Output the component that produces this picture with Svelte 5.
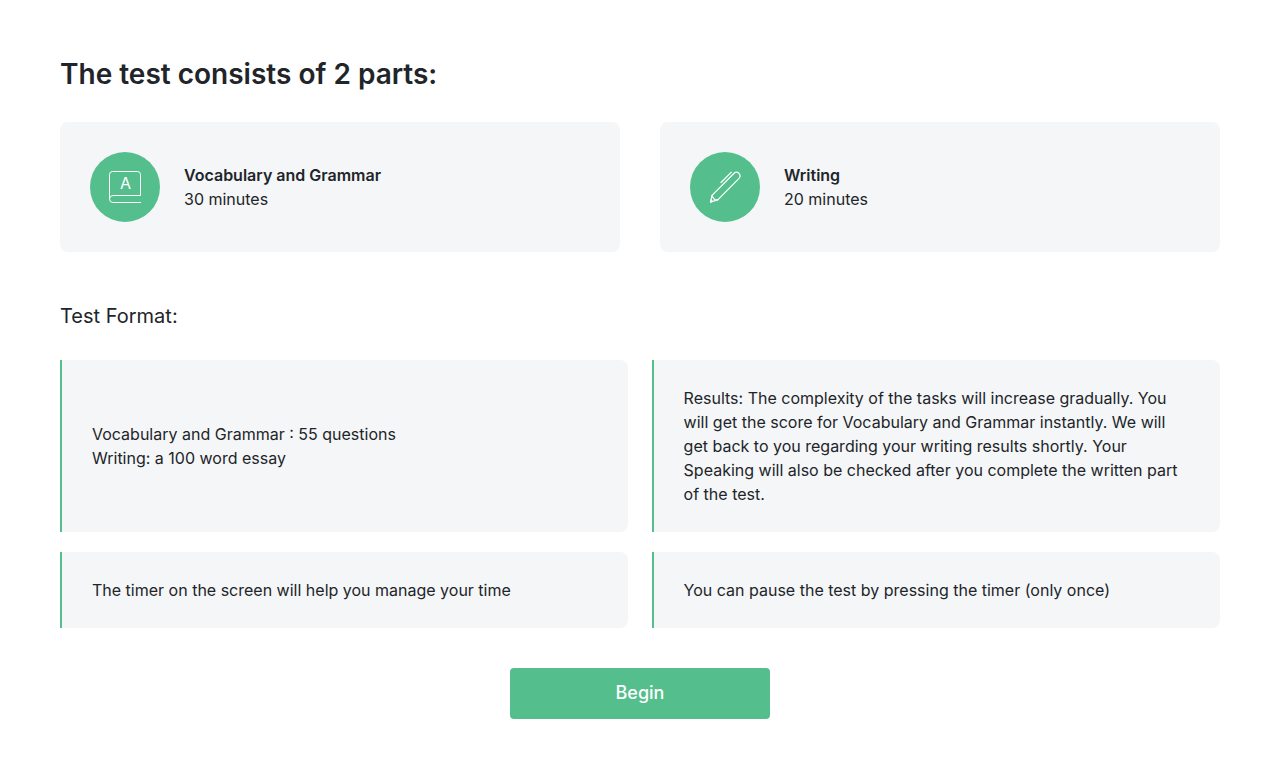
<script>
  const parts = [
    { icon: 'book', name: 'Vocabulary and Grammar', time: '30 minutes' },
    { icon: 'pen', name: 'Writing', time: '20 minutes' }
  ];
  const notes = [
    ['Vocabulary and Grammar : 55 questions', 'Writing: a 100 word essay'],
    [
      'Results: The complexity of the tasks will increase gradually. You will get the score for Vocabulary and Grammar instantly. We will get back to you regarding your writing results shortly. Your Speaking will also be checked after you complete the written part of the test.'
    ],
    ['The timer on the screen will help you manage your time'],
    ['You can pause the test by pressing the timer (only once)']
  ];
</script>

<main>
  <h1>The test consists of 2 parts:</h1>
  <section class="parts">
    {#each parts as part}
      <article class="part">
        <svg class="icon" viewBox="0 0 70 70" aria-hidden="true">
          <circle cx="35" cy="35" r="35" fill="#54be8d" />
          {#if part.icon === 'book'}
            <g fill="none" stroke="#fff" stroke-width="1">
              <path d="M19.500 47V22.500a3 3 0 0 1 3-3h25a3 3 0 0 1 3 3V43.500H23a3.500 3.500 0 0 0-3.500 3.500a3.500 3.500 0 0 0 3.500 3.500H51" />
            </g>
            <text x="35.500" y="37" text-anchor="middle" fill="#fff">A</text>
          {:else}
            <g fill="none" stroke="#fff" stroke-width="1.200" stroke-linejoin="round" stroke-linecap="round">
              <path d="M20.500 50.300L22 43.300L43.800 21.500C45.400 20 47.500 20 48.900 21.300C50.300 22.800 50.300 25 48.800 26.600L28 47.600L20.500 50.300Z" />
              <path d="M22 43.300C21.600 45.500 23.500 45.200 23.900 46.500C24.500 48 26 48.500 28 47.600" />
              <path d="M31 30.500L41.400 20.100" />
            </g>
            <path d="M20.200 50.700l.7-3.600l2.700 2.500z" fill="#fff" />
          {/if}
        </svg>
        <div>
          <h2>{part.name}</h2>
          <p>{part.time}</p>
        </div>
      </article>
    {/each}
  </section>

  <h3>Test Format:</h3>
  <section class="notes">
    {#each notes as lines}
      <div class="note">
        {#each lines as line}
          <p>{line}</p>
        {/each}
      </div>
    {/each}
  </section>

  <button type="button">Begin</button>
</main>

<style>
  :global(body) {
    margin: 0;
    background: #fff;
  }
  main {
    display: flex;
    flex-direction: column;
    padding: 56px 60px 60px;
    color: #212529;
    font: 400 16px/24px Inter, 'Liberation Sans', sans-serif;
  }
  h1,
  h2,
  h3,
  p {
    margin: 0;
  }
  h1 {
    font-size: 28px;
    line-height: 36px;
    font-weight: 600;
  }
  .parts {
    display: grid;
    grid-template-columns: 1fr 1fr;
    gap: 40px;
    margin-top: 30px;
  }
  .part {
    display: flex;
    align-items: center;
    gap: 24px;
    padding: 30px;
    background: #f5f6f8;
    border-radius: 8px;
  }
  .icon {
    width: 70px;
    height: 70px;
    flex: none;
  }
  .icon text {
    font: 400 16px Inter, sans-serif;
  }
  h2 {
    font-size: 16px;
    line-height: 24px;
    font-weight: 600;
  }
  h3 {
    margin-top: 50px;
    font-size: 20px;
    line-height: 28px;
    font-weight: 400;
  }
  .notes {
    display: grid;
    grid-template-columns: 1fr 1fr;
    gap: 20px 2%;
    margin-top: 30px;
  }
  .note {
    display: flex;
    flex-direction: column;
    justify-content: center;
    padding: 26px 30px;
    background: #f5f6f8;
    border-left: 2px solid #54be8d;
    border-radius: 0 8px 8px 0;
  }
  button {
    align-self: center;
    width: 260px;
    margin-top: 40px;
    padding: 13px 20px 14px;
    border: 0;
    border-radius: 4px;
    background: #54be8d;
    color: #fff;
    font: 500 18px/24px Inter, 'Liberation Sans', sans-serif;
    cursor: pointer;
  }
</style>
